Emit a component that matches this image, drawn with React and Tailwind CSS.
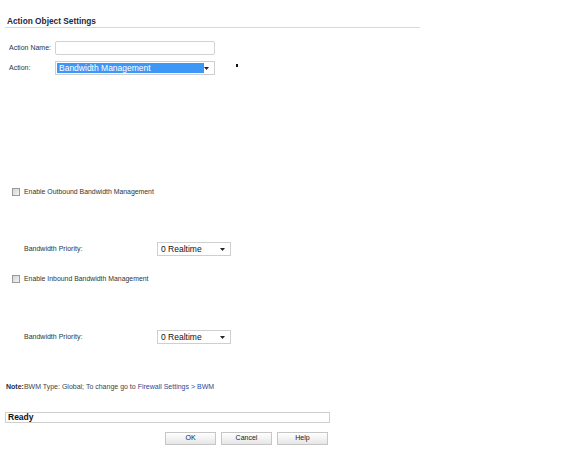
import React from "react";

const font = { fontFamily: '"Liberation Sans", Arial, sans-serif' };

function Arrow() {
  return (
    <svg width="5" height="3" viewBox="0 0 5 3" className="shrink-0">
      <path d="M0 0 L5 0 L2.5 3 Z" fill="#222" />
    </svg>
  );
}

function Checkbox() {
  return (
    <span className="inline-block w-[8px] h-[8px] border border-[#9a9a9a] bg-gradient-to-br from-[#d4d4d4] to-[#f4f4f4]" />
  );
}

function PrioritySelect() {
  return (
    <div className="ml-[133px] w-[74px] h-[14px] border border-[#cfcfcf] bg-white flex items-center justify-between pl-[3px] pr-[5px]">
      <span className="text-[8.5px] leading-none text-[#111]">0 Realtime</span>
      <Arrow />
    </div>
  );
}

export default function App() {
  return (
    <div className="w-[574px] h-[471px] bg-white text-[#222] overflow-hidden" style={font}>
      <div className="pl-[5px]">
        <div className="mt-[17px] w-[415px] h-[11px] border-b border-[#d9d9d9] flex items-start">
          <span className="ml-[2px] text-[8.3px] leading-[9px] font-bold text-[#1c2a45]">Action Object Settings</span>
        </div>

        <div className="mt-[13px] h-[14px] flex items-center">
          <span className="ml-[4px] w-[46px] text-[7px] text-[#333]">Action Name:</span>
          <div className="w-[160px] h-[14px] border border-[#d2d2d2] rounded-[2px] bg-white" />
        </div>

        <div className="mt-[6px] h-[14px] flex items-center">
          <span className="ml-[4px] w-[46px] text-[7px] text-[#333]">Action:</span>
          <div className="w-[160px] h-[14px] border border-[#cfcfcf] bg-white flex items-center pl-[1px] pr-[5px]">
            <div className="w-[147px] h-[10px] bg-[#3d97f7] flex items-center pl-[2px]">
              <span className="text-[8.5px] leading-none text-white">Bandwidth Management</span>
            </div>
            <div className="flex-1 flex justify-end">
              <Arrow />
            </div>
          </div>
          <span className="ml-[21px] mt-[-6px] w-[2px] h-[3px] bg-[#111]" />
        </div>

        <div className="mt-[113px] h-[8px] flex items-center">
          <span className="ml-[7px] flex items-center"><Checkbox /></span>
          <span className="ml-[4px] text-[6.9px] text-[#333]">Enable Outbound Bandwidth Management</span>
        </div>

        <div className="mt-[46px] h-[14px] flex items-center">
          <span className="ml-[19px] w-[0px] whitespace-nowrap text-[7px] text-[#333]">Bandwidth Priority:</span>
          <PrioritySelect />
        </div>

        <div className="mt-[19px] h-[8px] flex items-center">
          <span className="ml-[7px] flex items-center"><Checkbox /></span>
          <span className="ml-[4px] text-[6.9px] text-[#333]">Enable Inbound Bandwidth Management</span>
        </div>

        <div className="mt-[47px] h-[14px] flex items-center">
          <span className="ml-[19px] w-[0px] whitespace-nowrap text-[7px] text-[#333]">Bandwidth Priority:</span>
          <PrioritySelect />
        </div>

        <div className="mt-[38px] h-[10px] flex items-center text-[7px]">
          <span className="ml-[1px] font-bold text-[#1c2a45]">Note:</span>
          <span className="text-[#444]">BWM Type: Global; To change go to&nbsp;</span>
          <span className="text-[#2a4a9a]">Firewall Settings &gt; BWM</span>
        </div>

        <div className="mt-[20px] w-[325px] h-[11px] border border-[#cfcfcf] flex items-center pl-[2px]">
          <span className="text-[8.5px] leading-none font-bold text-[#111]">Ready</span>
        </div>

        <div className="mt-[9px] flex gap-[5px] ml-[160px]">
          <div className="w-[51px] h-[13px] border border-[#c6c6c6] bg-gradient-to-b from-white to-[#e6e6e6] flex items-center justify-center text-[7px] text-[#222]">OK</div>
          <div className="w-[51px] h-[13px] border border-[#c6c6c6] bg-gradient-to-b from-white to-[#e6e6e6] flex items-center justify-center text-[7px] text-[#222]">Cancel</div>
          <div className="w-[51px] h-[13px] border border-[#c6c6c6] bg-gradient-to-b from-white to-[#e6e6e6] flex items-center justify-center text-[7px] text-[#222]">Help</div>
        </div>
      </div>
    </div>
  );
}
